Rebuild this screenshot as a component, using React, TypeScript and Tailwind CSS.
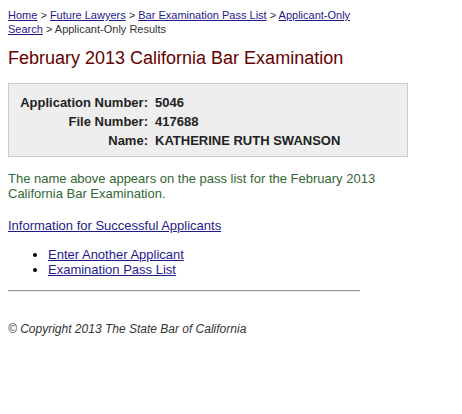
import React from "react";

const linkCls = "text-[#1f1a8a] underline";

const rows = [
  { label: "Application Number:", value: "5046" },
  { label: "File Number:", value: "417688" },
  { label: "Name:", value: "KATHERINE RUTH SWANSON" },
];

const App: React.FC = () => {
  return (
    <div className="min-h-screen bg-white p-2 font-['Liberation_Sans',Arial,sans-serif]">
      <div className="w-[368px]">
        {/* Breadcrumb */}
        <div className="text-[11px] leading-[14px] text-[#333333]">
          <a href="#" className={linkCls}>Home</a> &gt;{" "}
          <a href="#" className={linkCls}>Future Lawyers</a> &gt;{" "}
          <a href="#" className={linkCls}>Bar Examination Pass List</a> &gt;{" "}
          <a href="#" className={linkCls}>Applicant-Only Search</a> &gt; Applicant-Only Results
        </div>

        <h1 className="mt-[11px] text-[18px] leading-[22px] font-normal text-[#660000]">
          February 2013 California Bar Examination
        </h1>

        {/* Applicant box */}
        <div className="mt-[14px] w-[400px] border border-[#cccccc] bg-[#eeeeee] pt-[9px] pb-[6px]">
          {rows.map((r) => (
            <div key={r.label} className="flex text-[13px] leading-[19px] font-bold text-[#222222]">
              <div className="w-[139px] text-right">{r.label}</div>
              <div className="ml-[7px]">{r.value}</div>
            </div>
          ))}
        </div>

        <p className="mt-[14px] text-[13px] leading-[15px] text-[#336633]">
          The name above appears on the pass list for the February 2013 California Bar Examination.
        </p>

        <div className="mt-[17px] text-[13px] leading-[15px]">
          <a href="#" className={linkCls}>Information for Successful Applicants</a>
        </div>

        <ul className="mt-[14px] list-disc pl-[40px] text-[13px] leading-[15px]">
          <li>
            <a href="#" className={linkCls}>Enter Another Applicant</a>
          </li>
          <li>
            <a href="#" className={linkCls}>Examination Pass List</a>
          </li>
        </ul>

        <hr className="mt-[13px] w-[352px] border-t border-b border-t-[#999999] border-b-[#eeeeee]" />

        <p className="mt-[30px] text-[12px] leading-[15px] italic text-[#333333]">
          © Copyright 2013 The State Bar of California
        </p>
      </div>
    </div>
  );
};

export default App;
